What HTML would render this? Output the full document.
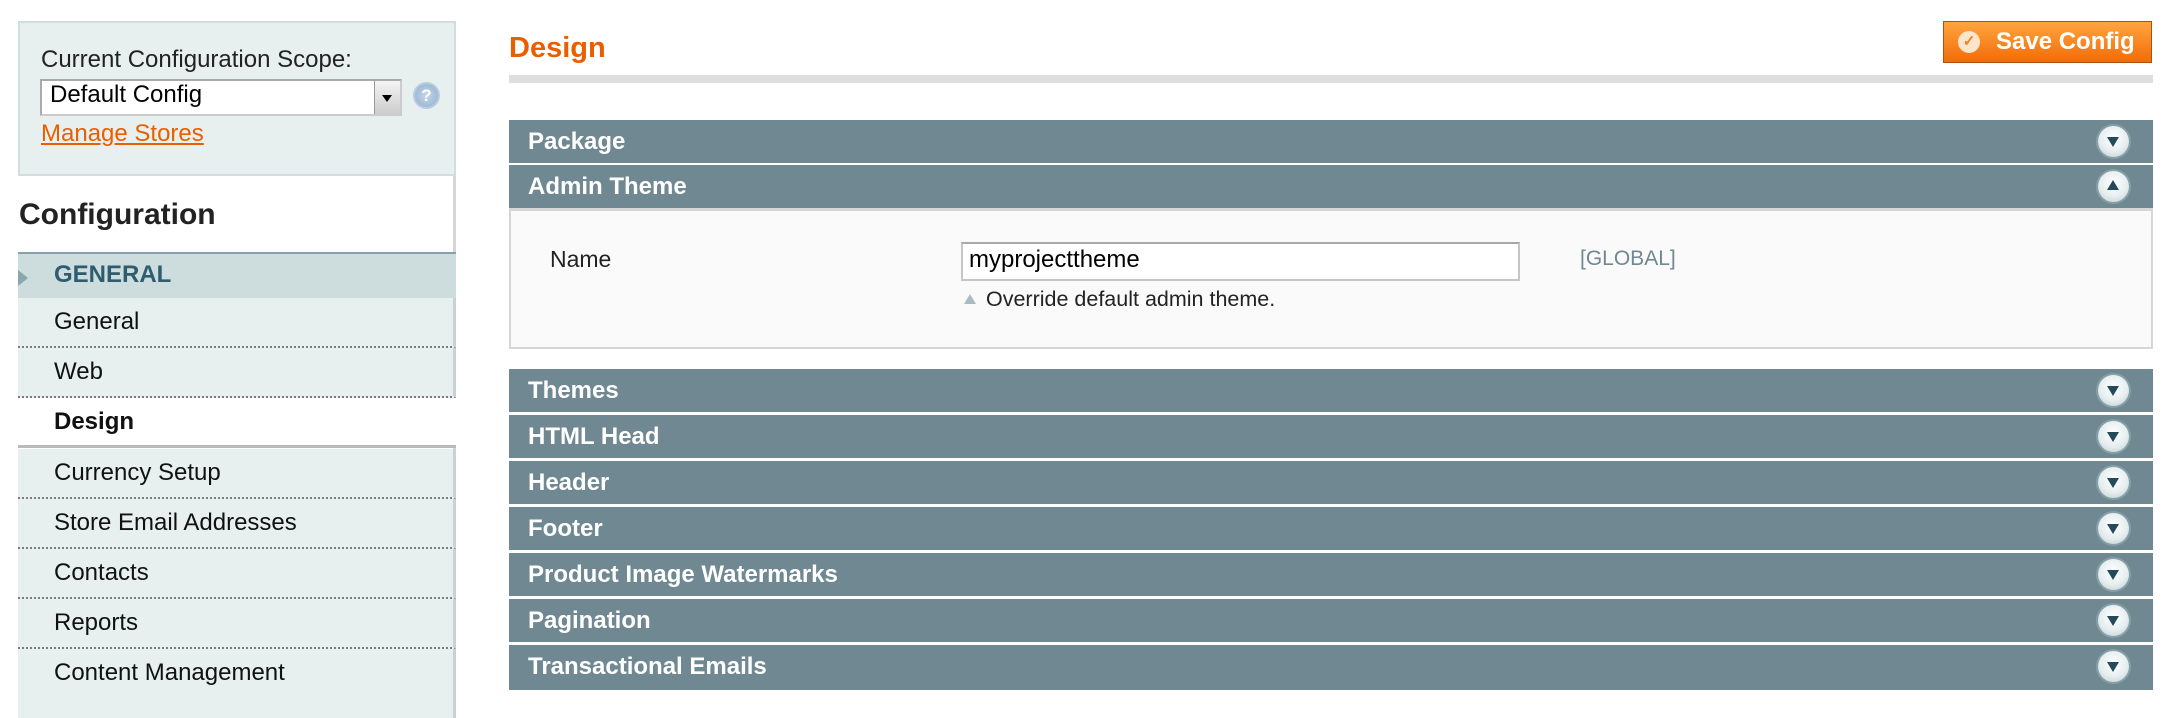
<!DOCTYPE html>
<html><head><meta charset="utf-8"><style>
*{margin:0;padding:0;box-sizing:border-box}
body{width:2168px;height:718px;background:#fff;font-family:"Liberation Sans",Arial,sans-serif;position:relative;overflow:hidden;color:#2f2f2f}
.a{position:absolute}
.scope{left:18px;top:21px;width:438px;height:155px;background:#e7efef;border:2px solid #d1dede}
.side{left:18px;top:176px;width:438px;height:542px;border-right:3px solid #d6d6d6}
.item{position:absolute;left:18px;width:438px;height:50px;background:#e7efef;border-bottom:2px dotted #7c7c7c;font-size:24px;color:#111;padding-left:36px;line-height:48px;border-right:3px solid #c9d2d2}
.hd{position:absolute;left:509px;width:1644px;height:43px;background:#6f8892;color:#fff;font-weight:bold;font-size:24px;line-height:43px;padding-left:19px}
.ar{position:absolute;right:24px;top:6px;width:31px;height:31px;border-radius:50%;background:radial-gradient(circle at 50% 40%,#fff 0,#e6eef0 55%,#b9c8cc 100%);box-shadow:0 0 0 2px #86a0a8}
.ar:after{content:"";position:absolute;left:9px;top:11px;border-left:6.5px solid transparent;border-right:6.5px solid transparent;border-top:10px solid #23495a}
.ar.up:after{top:9px;border-top:0;border-bottom:10px solid #23495a}
</style></head><body>
<div class="a scope"></div>
<div class="a" style="left:41px;top:46px;font-size:24px;color:#222">Current Configuration Scope:</div>
<div class="a" style="left:40px;top:79px;width:362px;height:37px;background:#fff;border:2px solid #aaa;border-right-color:#ccc;border-bottom-color:#ccc"></div>
<div class="a" style="left:50px;top:81px;font-size:24px;color:#000">Default Config</div>
<div class="a" style="left:374px;top:81px;width:26px;height:33px;background:linear-gradient(#f4f4f4,#ccc);border-left:1px solid #999"></div>
<div class="a" style="left:382px;top:95px;border-left:5px solid transparent;border-right:5px solid transparent;border-top:7px solid #000"></div>
<div class="a" style="left:413px;top:82px;width:27px;height:27px;border-radius:50%;background:radial-gradient(#c6d6e8,#8eaed0);border:2px solid #b8cde0;color:#fff;font-weight:bold;font-size:17px;text-align:center;line-height:23px">?</div>
<div class="a" style="left:41px;top:120px;font-size:24px;color:#eb5e00;text-decoration:underline">Manage Stores</div>
<div class="a side"></div>
<div class="a" style="left:19px;top:198px;font-size:30px;font-weight:bold;color:#222">Configuration</div>
<div class="a" style="left:18px;top:252px;width:438px;height:46px;background:#cddddd;border-top:2px solid #8aa0a8"></div>
<div class="a" style="left:18px;top:270px;border-top:8px solid transparent;border-bottom:8px solid transparent;border-left:10px solid #8aa6ae"></div>
<div class="a" style="left:54px;top:261px;font-size:24px;font-weight:bold;color:#2f5c6e">GENERAL</div>
<div class="item" style="top:298px">General</div>
<div class="item" style="top:348px">Web</div>
<div class="item" style="top:398px;background:#fff;border-bottom:3px solid #bbb;border-right:none;font-weight:bold">Design</div>
<div class="item" style="top:449px">Currency Setup</div>
<div class="item" style="top:499px">Store Email Addresses</div>
<div class="item" style="top:549px">Contacts</div>
<div class="item" style="top:599px">Reports</div>
<div class="item" style="top:649px;height:69px;border-bottom:none">Content Management</div>

<div class="a" style="left:509px;top:32px;font-size:29px;font-weight:bold;color:#eb5e00">Design</div>
<div class="a" style="left:509px;top:75px;width:1644px;height:8px;background:#dedede"></div>
<div class="a" style="left:1943px;top:21px;width:209px;height:42px;background:linear-gradient(#ffa540,#f26c08);border:1px solid #b0500e;color:#fff;font-weight:bold;font-size:24px;line-height:40px;padding-left:52px">Save Config</div>
<div class="a" style="left:1958px;top:31px;width:22px;height:22px;border-radius:50%;background:#fde5cc;color:#f08020;font-size:15px;text-align:center;line-height:22px;font-weight:bold">✓</div>

<div class="hd" style="top:120px">Package<div class="ar"></div></div>
<div class="hd" style="top:165px">Admin Theme<div class="ar up"></div></div>
<div class="a" style="left:509px;top:208px;width:1644px;height:141px;background:#fafafa;border:2px solid #d6d6d6;border-top:3px solid #d6d6d6"></div>
<div class="a" style="left:550px;top:246px;font-size:23px;color:#222">Name</div>
<div class="a" style="left:961px;top:242px;width:559px;height:39px;background:#fff;border:2px solid #c6c6c6;border-top-color:#a8a8a8"></div>
<div class="a" style="left:969px;top:246px;font-size:24px;color:#000">myprojecttheme</div>
<div class="a" style="left:1580px;top:247px;font-size:21px;color:#6f8892">[GLOBAL]</div>
<div class="a" style="left:964px;top:294px;border-left:6px solid transparent;border-right:6px solid transparent;border-bottom:10px solid #a9bcc4"></div>
<div class="a" style="left:986px;top:287px;font-size:21.5px;color:#222">Override default admin theme.</div>

<div class="hd" style="top:369px">Themes<div class="ar"></div></div>
<div class="hd" style="top:415px">HTML Head<div class="ar"></div></div>
<div class="hd" style="top:461px">Header<div class="ar"></div></div>
<div class="hd" style="top:507px">Footer<div class="ar"></div></div>
<div class="hd" style="top:553px">Product Image Watermarks<div class="ar"></div></div>
<div class="hd" style="top:599px">Pagination<div class="ar"></div></div>
<div class="hd" style="top:645px;height:45px">Transactional Emails<div class="ar"></div></div>
</body></html>
